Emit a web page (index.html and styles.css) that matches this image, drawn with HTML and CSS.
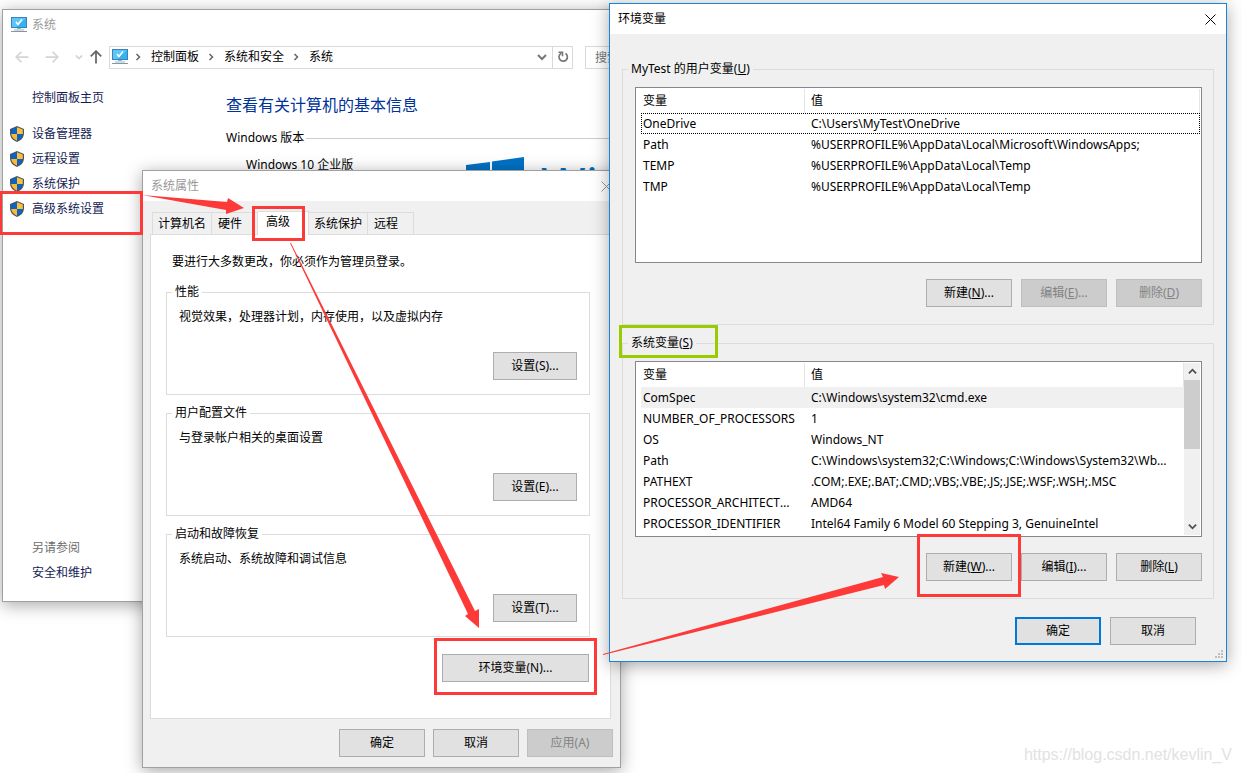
FILE: index.html
```
<!DOCTYPE html>
<html lang="zh-CN">

<head>
    <meta charset="UTF-8">
    <title>环境变量</title>
    <link rel="stylesheet" href="styles.css">
</head>

<body>

    <!-- 公用图标 -->
    <svg class="defs" aria-hidden="true">
        <symbol id="computer" viewBox="0 0 16 16">
            <rect x="0" y="0" width="16" height="11" fill="#3c82b4" />
            <rect x="1" y="1" width="14" height="9" fill="#34b2f5" />
            <path d="M1 1h14L5 10H1z" fill="#5cc6fb" />
            <path d="M5 5l2 2.500 4-5" fill="none" stroke="#fff" stroke-width="1.600" />
            <path d="M6 11.500h4M3 13h10" stroke="#9bb4c4" />
            <path d="M0 14.500h16" stroke="#8098a8" />
        </symbol>
        <symbol id="shield" viewBox="0 0 14 16">
            <path d="M7 0L14 3V7C14 11.500 11 14.500 7 16C3 14.500 0 11.500 0 7V3z" fill="#4a5560" />
            <path d="M7 1.200V8H1.200V3.600z" fill="#0a64c8" />
            <path d="M7 1.200V8H12.800V3.600z" fill="#fdbf37" />
            <path d="M7 8V14.700C3.800 13.400 1.600 11 1.200 8z" fill="#fdb92c" />
            <path d="M7 8V14.700C10.200 13.400 12.400 11 12.800 8z" fill="#0a64c8" />
        </symbol>
        <symbol id="close" viewBox="0 0 11 11">
            <path d="M.5 .5l10 10M10.500 .5l-10 10" fill="none" stroke="currentColor" stroke-width="1" />
        </symbol>
        <symbol id="chevron" viewBox="0 0 10 10">
            <path d="M3.500 2l3 3-3 3" fill="none" stroke="currentColor" stroke-width="1.500" />
        </symbol>
        <symbol id="arrow" viewBox="0 0 12 12">
            <path d="M11.500 6H1M5.500 1.500L1 6l4.500 4.500" fill="none" stroke="currentColor" stroke-width="1.500" />
        </symbol>
        <symbol id="down" viewBox="0 0 10 10">
            <path d="M1 3l4 4 4-4" fill="none" stroke="currentColor" stroke-width="2" />
        </symbol>
    </svg>

    <div class="desktop">

        <!-- 系统 -->
        <div class="window system">
            <div class="title_bar">
                <svg class="icon"><use href="#computer" /></svg>
                <span>系统</span>
            </div>
            <div class="nav">
                <button class="nav_btn" disabled aria-label="后退"><svg><use href="#arrow" /></svg></button>
                <button class="nav_btn forward" disabled aria-label="前进"><svg><use href="#arrow" /></svg></button>
                <button class="nav_btn recent" disabled aria-label="最近"><svg><use href="#down" /></svg></button>
                <button class="nav_btn up" aria-label="上移"><svg><use href="#arrow" /></svg></button>
                <div class="address">
                    <svg class="icon"><use href="#computer" /></svg>
                    <svg class="sep"><use href="#chevron" /></svg>
                    <a href="#">控制面板</a>
                    <svg class="sep"><use href="#chevron" /></svg>
                    <a href="#">系统和安全</a>
                    <svg class="sep"><use href="#chevron" /></svg>
                    <a href="#">系统</a>
                    <button class="history" aria-label="历史记录"><svg><use href="#down" /></svg></button>
                    <button class="refresh" aria-label="刷新">
                        <svg viewBox="0 0 12 12">
                            <path d="M4.200 2.300A4.200 4.200 0 1 0 8.500 2.500" fill="none" stroke="currentColor" stroke-width="1.700" />
                            <path d="M1.500 1.200H5.500V5.200" fill="none" stroke="currentColor" stroke-width="1.600" />
                        </svg>
                    </button>
                </div>
                <input class="search" type="text" placeholder="搜索控制面板" aria-label="搜索控制面板">
            </div>
            <div class="system_body">
                <div class="sidebar">
                    <a class="home" href="#">控制面板主页</a>
                    <a href="#"><svg class="shield"><use href="#shield" /></svg>设备管理器</a>
                    <a href="#"><svg class="shield"><use href="#shield" /></svg>远程设置</a>
                    <a href="#"><svg class="shield"><use href="#shield" /></svg>系统保护</a>
                    <a href="#"><svg class="shield"><use href="#shield" /></svg>高级系统设置</a>
                    <span class="see_also">另请参阅</span>
                    <a href="#">安全和维护</a>
                </div>
                <div class="system_main">
                    <h1>查看有关计算机的基本信息</h1>
                    <h2>Windows 版本</h2>
                    <div class="edition">
                        <span>Windows 10 企业版</span>
                        <svg class="win_logo" viewBox="0 0 58 60">
                            <path d="M0 8L24 5V29H0zM26 4.500L58 0V29H26zM0 31H24V55L0 52zM26 31H58V60L26 55.500z" fill="#0072c6" />
                        </svg>
                        <span class="win_name">Windows</span>
                    </div>
                </div>
            </div>
        </div>

        <!-- 系统属性 -->
        <div class="window props">
            <div class="title_bar">
                <span>系统属性</span>
                <button class="close" aria-label="关闭"><svg><use href="#close" /></svg></button>
            </div>
            <div class="props_body">
                <div class="tabs">
                    <button>计算机名</button>
                    <button class="wide">硬件</button>
                    <button class="active">高级</button>
                    <button>系统保护</button>
                    <button class="wide">远程</button>
                </div>
                <div class="page">
                    <p>要进行大多数更改，你必须作为管理员登录。</p>
                    <fieldset>
                        <legend>性能</legend>
                        <div>视觉效果，处理器计划，内存使用，以及虚拟内存</div>
                        <button class="btn">设置(S)...</button>
                    </fieldset>
                    <fieldset>
                        <legend>用户配置文件</legend>
                        <div>与登录帐户相关的桌面设置</div>
                        <button class="btn">设置(E)...</button>
                    </fieldset>
                    <fieldset>
                        <legend>启动和故障恢复</legend>
                        <div>系统启动、系统故障和调试信息</div>
                        <button class="btn">设置(T)...</button>
                    </fieldset>
                    <button class="btn env_btn">环境变量(N)...</button>
                </div>
                <div class="btns">
                    <button class="btn">确定</button>
                    <button class="btn">取消</button>
                    <button class="btn" disabled>应用(A)</button>
                </div>
            </div>
        </div>

        <!-- 环境变量 -->
        <div class="window env">
            <div class="title_bar">
                <span>环境变量</span>
                <button class="close" aria-label="关闭"><svg><use href="#close" /></svg></button>
            </div>
            <div class="env_body">
                <fieldset>
                    <legend>MyTest 的用户变量(<u>U</u>)</legend>
                    <div class="list">
                        <table>
                            <thead>
                                <tr><th class="name">变量</th><th>值</th></tr>
                            </thead>
                            <tbody>
                                <tr class="focus"><td>OneDrive</td><td>C:\Users\MyTest\OneDrive</td></tr>
                                <tr><td>Path</td><td>%USERPROFILE%\AppData\Local\Microsoft\WindowsApps;</td></tr>
                                <tr><td>TEMP</td><td>%USERPROFILE%\AppData\Local\Temp</td></tr>
                                <tr><td>TMP</td><td>%USERPROFILE%\AppData\Local\Temp</td></tr>
                            </tbody>
                        </table>
                    </div>
                    <div class="btns">
                        <button class="btn">新建(<u>N</u>)...</button>
                        <button class="btn" disabled>编辑(<u>E</u>)...</button>
                        <button class="btn" disabled>删除(<u>D</u>)</button>
                    </div>
                </fieldset>
                <fieldset>
                    <legend>系统变量(<u>S</u>)</legend>
                    <div class="list">
                        <table>
                            <thead>
                                <tr><th class="name">变量</th><th>值</th></tr>
                            </thead>
                            <tbody>
                                <tr class="selected"><td>ComSpec</td><td>C:\Windows\system32\cmd.exe</td></tr>
                                <tr><td>NUMBER_OF_PROCESSORS</td><td>1</td></tr>
                                <tr><td>OS</td><td>Windows_NT</td></tr>
                                <tr><td>Path</td><td>C:\Windows\system32;C:\Windows;C:\Windows\System32\Wbem;</td></tr>
                                <tr><td>PATHEXT</td><td>.COM;.EXE;.BAT;.CMD;.VBS;.VBE;.JS;.JSE;.WSF;.WSH;.MSC</td></tr>
                                <tr><td>PROCESSOR_ARCHITECTURE</td><td>AMD64</td></tr>
                                <tr><td>PROCESSOR_IDENTIFIER</td><td>Intel64 Family 6 Model 60 Stepping 3, GenuineIntel</td></tr>
                            </tbody>
                        </table>
                        <div class="scrollbar">
                            <button class="scroll_up" aria-label="向上"><svg><use href="#down" /></svg></button>
                            <div class="thumb"></div>
                            <button aria-label="向下"><svg><use href="#down" /></svg></button>
                        </div>
                    </div>
                    <div class="btns">
                        <button class="btn">新建(<u>W</u>)...</button>
                        <button class="btn">编辑(<u>I</u>)...</button>
                        <button class="btn">删除(<u>L</u>)</button>
                    </div>
                </fieldset>
                <div class="btns">
                    <button class="btn default">确定</button>
                    <button class="btn">取消</button>
                </div>
            </div>
            <svg class="grip" viewBox="0 0 8 8">
                <path d="M6 0h2v2h-2zM3 3h2v2h-2zM6 3h2v2h-2zM0 6h2v2h-2zM3 6h2v2h-2zM6 6h2v2h-2z" fill="#bfbfbf" />
            </svg>
        </div>

        <!-- 标注：红框、绿框、箭头 -->
        <svg class="marks" aria-hidden="true">
            <g fill="none" stroke="#fd3a38" stroke-width="3">
                <rect x=".5" y="192.500" width="141" height="41" />
                <rect x="253.500" y="207.500" width="50" height="32" />
                <rect x="435.500" y="639.500" width="160" height="54" />
                <rect x="918.500" y="535.500" width="101" height="60" />
                <rect x="620.500" y="326.500" width="96" height="30" stroke="#99cc00" />
            </g>
            <g fill="#fd3a38">
                <path d="M142 195L227 202L228 198L244 208L226 214L226 210z" />
                <path d="M290 243H291L475 611L479 609V628L465 616L468 614z" />
                <path d="M603 654L883 577L881 573L899 577L885 589L884 585L603 655z" />
            </g>
        </svg>

        <div class="watermark">https://blog.csdn.net/kevlin_V</div>
    </div>

</body>

</html>
```
FILE: styles.css
```
* {
    margin: 0;
    padding: 0;
    box-sizing: border-box;
}

body {
    font-family: "Noto Sans", "Noto Sans CJK SC", sans-serif;
    font-size: 12px;
    line-height: 16px;
    color: #000;
    background: #fff;
}

button,
input {
    font: inherit;
    color: inherit;
}

a {
    color: inherit;
    text-decoration: none;
}

svg {
    display: block;
    flex: none;
}

.defs {
    position: absolute;
    width: 0;
    height: 0;
}

.desktop {
    position: relative;
    min-height: 100vh;
    overflow: hidden;
}

/* 窗口 */
.window {
    position: absolute;
    isolation: isolate;
    border: 1px solid #a0a0a0;
    box-shadow: 0 3px 16px rgba(0, 0, 0, .35);
}

.title_bar {
    display: flex;
    align-items: center;
    height: 30px;
    padding: 0 8px;
    background: #fff;
    color: #999;
}

.icon {
    width: 16px;
    height: 16px;
}

.close {
    margin-left: auto;
    border: none;
    background: none;
}

.close svg {
    width: 11px;
    height: 11px;
}

/* 按钮 */
.btn {
    width: 86px;
    height: 28px;
    border: 1px solid #adadad;
    background: #e1e1e1;
    text-align: center;
}

.btn:disabled {
    border-color: #bfbfbf;
    background: #ccc;
    color: #838383;
}

.btn.default {
    border: 2px solid #0078d7;
}

.btns {
    display: flex;
    justify-content: flex-end;
    gap: 9px;
}

fieldset {
    min-width: 0;
    border: 1px solid #dcdcdc;
}

legend {
    margin-left: -7px;
    padding: 0 3px;
}

/* 系统 */
.system {
    left: 2px;
    top: 9px;
    width: 50%;
    background: #fff;
}

.system .title_bar {
    gap: 5px;
}

.nav {
    display: flex;
    align-items: center;
    height: 34px;
    padding-left: 12px;
}

.nav_btn {
    flex: none;
    width: 30px;
    border: none;
    background: none;
    color: #666;
}

.nav_btn:disabled {
    color: #d4d4d4;
}

.nav_btn svg {
    width: 14px;
    height: 14px;
}

.nav_btn.forward svg {
    transform: rotate(180deg);
}

.nav_btn.recent {
    width: 8px;
}

.nav_btn.recent svg {
    width: 8px;
    height: 8px;
}

.nav_btn.up {
    width: 26px;
}

.nav_btn.up svg {
    margin: 0 auto;
    transform: rotate(90deg);
}

.address {
    display: flex;
    flex: none;
    align-items: center;
    width: 464px;
    height: 23px;
    padding-left: 2px;
    border: 1px solid #d9d9d9;
}

.address a {
    margin-right: 7px;
}

.sep {
    width: 10px;
    height: 10px;
    margin-right: 8px;
    color: #666;
}

.icon + .sep {
    margin-left: 5px;
}

.history,
.refresh {
    display: flex;
    align-items: center;
    justify-content: center;
    height: 100%;
    width: 20px;
    border: none;
    background: none;
    color: #777;
}

.history {
    margin-left: auto;
}

.refresh {
    border-left: 1px solid #d9d9d9;
}

.history svg {
    width: 10px;
    height: 10px;
}

.refresh svg {
    width: 12px;
    height: 12px;
}

.search {
    flex: 1;
    min-width: 0;
    height: 23px;
    margin-left: 12px;
    padding-left: 9px;
    border: 1px solid #d9d9d9;
}

.search::placeholder {
    color: #767676;
}

.system_body {
    display: flex;
}

.sidebar {
    display: flex;
    flex: none;
    flex-direction: column;
    gap: 9px;
    width: 194px;
    min-height: 527px;
    padding: 16px 7px 20px 29px;
    color: #151c55;
}

.sidebar a {
    display: flex;
    align-items: center;
}

.sidebar .home {
    margin-bottom: 11px;
}

.shield {
    width: 14px;
    height: 16px;
    margin-left: -22px;
    margin-right: 8px;
}

.see_also {
    margin-top: auto;
    color: #6d6d6d;
}

.system_main {
    flex: 1;
    min-width: 0;
    padding: 19px 0 0 29px;
}

.system_main h1 {
    font-size: 16px;
    line-height: 24px;
    font-weight: normal;
    color: #003399;
}

.system_main h2 {
    display: flex;
    align-items: center;
    margin-top: 13px;
    font-size: 12px;
    font-weight: normal;
}

.system_main h2::after {
    content: "";
    flex: 1;
    margin-left: 2px;
    border-top: 1px solid #ccc;
}

.edition {
    display: flex;
    align-items: flex-start;
    padding: 11px 0 0 20px;
}

.edition span:first-child {
    flex: none;
    width: 220px;
}

.win_logo {
    width: 58px;
    height: 60px;
}

.win_name {
    margin-left: 17px;
    font-size: 48px;
    line-height: 54px;
    color: #0072c6;
    white-space: nowrap;
}

/* 系统属性 */
.props {
    left: 142px;
    top: 170px;
    width: 479px;
    background: #f0f0f0;
}

.props_body {
    padding: 10px 7px;
}

.tabs {
    display: flex;
    align-items: flex-end;
    padding-left: 2px;
}

.tabs button {
    height: 22px;
    padding: 0 5px;
    border: 1px solid #dcdcdc;
    border-bottom: none;
    background: #f0f0f0;
    white-space: nowrap;
}

.tabs button + button {
    border-left: none;
}

.tabs .wide {
    padding-left: 6px;
    padding-right: 15px;
}

.tabs .active {
    height: 24px;
    margin-bottom: -1px;
    padding: 0 18px 4px 8px;
    background: #fff;
    z-index: 1;
}

.page {
    display: flex;
    flex-direction: column;
    margin-right: 2px;
    padding: 19px 20px 36px 15px;
    border: 1px solid #dcdcdc;
    background: #fff;
}

.page p {
    margin: 0 0 4px 6px;
}

.page fieldset {
    display: flex;
    flex-direction: column;
    margin-top: 10px;
    padding: 9px 12px 14px;
}

.page fieldset .btn {
    align-self: flex-end;
    width: 84px;
    margin-top: 27px;
}

.env_btn {
    align-self: flex-end;
    width: 147px;
    margin: 17px 1px 0 0;
}

.props_body > .btns {
    gap: 8px;
    margin-top: 10px;
}

/* 环境变量 */
.env {
    left: 609px;
    top: 3px;
    width: 618px;
    border-color: #1883d7;
    background: #f0f0f0;
}

.env .title_bar {
    color: #000;
    padding-right: 10px;
}

.env_body {
    padding: 27px 12px 16px;
}

.env fieldset {
    margin-bottom: 10px;
    padding: 10px 11px 17px 12px;
}

.list {
    display: flex;
    align-items: flex-start;
    min-height: 176px;
    margin-bottom: 16px;
    padding: 1px 1px 1px 5px;
    border: 1px solid #828790;
    background: #fff;
}

table {
    flex: 1;
    min-width: 0;
    width: 100%;
    table-layout: fixed;
    border-collapse: separate;
    border-spacing: 0;
}

th {
    height: 24px;
    border-right: 1px solid #e5e5e5;
    font-weight: normal;
    text-align: left;
}

th.name {
    width: 164px;
}

td {
    height: 21px;
    padding-right: 8px;
    overflow: hidden;
    white-space: nowrap;
    text-overflow: ellipsis;
}

th:first-child,
td:first-child {
    padding-left: 2px;
}

th:last-child,
td:last-child {
    padding-left: 6px;
}

td:last-child {
    padding-right: 14px;
}

.focus {
    outline: 1px dotted #000;
    outline-offset: -1px;
}

.selected {
    background: #f0f0f0;
}

.scrollbar {
    display: flex;
    flex-direction: column;
    align-self: stretch;
    width: 16px;
    background: #f0f0f0;
}

.scrollbar button {
    display: flex;
    align-items: center;
    justify-content: center;
    height: 17px;
    border: none;
    background: none;
    color: #505050;
}

.scrollbar svg {
    width: 9px;
    height: 9px;
}

.scroll_up svg {
    transform: rotate(180deg);
}

.thumb {
    height: 69px;
    margin-bottom: auto;
    background: #cdcdcd;
}

.env_body > .btns {
    padding: 8px 18px 0 0;
}

.grip {
    position: absolute;
    right: 3px;
    bottom: 3px;
    width: 8px;
    height: 8px;
}

/* 标注层 */
.marks {
    position: absolute;
    left: 0;
    top: 0;
    width: 100%;
    height: 100%;
    pointer-events: none;
}

.watermark {
    position: absolute;
    right: 10px;
    bottom: 8px;
    font-family: "Liberation Sans", sans-serif;
    font-size: 16px;
    line-height: 20px;
    color: #e2e2e2;
}
```
